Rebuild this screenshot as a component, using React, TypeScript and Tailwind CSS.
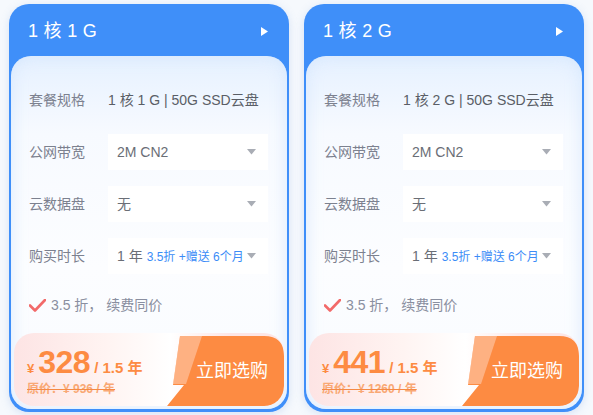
import React from "react";

type Plan = {
  title: string;
  spec: string;
  price: string;
  orig: string;
};

const plans: Plan[] = [
  { title: "1 核 1 G", spec: "1 核 1 G | 50G SSD云盘", price: "328", orig: "原价：¥ 936 / 年" },
  { title: "1 核 2 G", spec: "1 核 2 G | 50G SSD云盘", price: "441", orig: "原价：¥ 1260 / 年" },
];

function Caret() {
  return (
    <svg width="9" height="6" viewBox="0 0 9 6" className="shrink-0">
      <path d="M0 0 H9 L4.5 5.5 Z" fill="#a9adb5" />
    </svg>
  );
}

function Row({ label, children }: { label: string; children: React.ReactNode }) {
  return (
    <div className="flex items-center h-[36px]">
      <div className="w-[79px] text-[14px] text-[#7c818f]">{label}</div>
      {children}
    </div>
  );
}

function Select({ children }: { children: React.ReactNode }) {
  return (
    <div className="w-[160px] h-[36px] bg-white flex items-center justify-between pl-[9px] pr-[12px] text-[14px] text-[#6a6e76]">
      <div className="flex items-baseline whitespace-nowrap">{children}</div>
      <Caret />
    </div>
  );
}

function Card({ p }: { p: Plan }) {
  return (
    <div className="w-[280px] h-[408px] rounded-[20px] bg-[#3f8ff9] p-[2px] pb-[3px] flex flex-col shadow-[0_2px_8px_rgba(120,160,220,0.25)]">
      <div className="h-[50px] flex items-center justify-between pl-[17px] pr-[19px] shrink-0">
        <span className="text-white text-[18px] tracking-[0.3px]">{p.title}</span>
        <svg width="7" height="9" viewBox="0 0 7 9">
          <path d="M0 0 L7 4.5 L0 9 Z" fill="#ffffff" />
        </svg>
      </div>
      <div className="flex-1 rounded-[20px] bg-[linear-gradient(180deg,#e6f1ff_0%,#f7faff_22%,#fcfdff_60%,#f8fbff_100%)] shadow-[inset_0_0_16px_rgba(205,226,252,0.7)] flex flex-col pt-[26px] pb-[3px] px-[3px]">
        <div className="flex flex-col gap-[16px] pl-[15px]">
          <Row label="套餐规格">
            <span className="text-[14px] text-[#5a5e66]">{p.spec}</span>
          </Row>
          <Row label="公网带宽">
            <Select>2M CN2</Select>
          </Row>
          <Row label="云数据盘">
            <Select>无</Select>
          </Row>
          <Row label="购买时长">
            <Select>
              <span>1 年</span>
              <span className="text-[12px] text-[#3b8cf7] ml-[4px]">3.5折 +赠送 6个月</span>
            </Select>
          </Row>
        </div>
        <div className="flex items-center pl-[15px] mt-[20px] h-[22px] text-[14px] text-[#8a8fa0]">
          <svg width="17" height="13" viewBox="0 0 17 13" className="mr-[5px]">
            <path d="M1 6.5 L6 11.5 L16 1" stroke="#f26a6a" strokeWidth="2.6" fill="none" strokeLinecap="round" strokeLinejoin="round" />
          </svg>
          <span>3.5 折， 续费同价</span>
        </div>
        <div className="mt-auto relative h-[73px] rounded-[20px] overflow-hidden bg-[linear-gradient(90deg,#fde4e4_0%,#fff4f2_35%,#ffffff_58%,#fde6e6_80%)] flex">
          <svg className="absolute right-0 top-[3px]" width="120" height="70" viewBox="0 0 120 70">
            <path d="M16 0 H100 Q120 0 120 20 V50 Q120 70 100 70 H3 L20 49 H9 Z" fill="#fd8b42" />
            <path d="M16 0 H38 L22 48 H9 Z" fill="#ffd2b8" fillOpacity="0.55" />
          </svg>
          <div className="flex-1 flex flex-col justify-center pl-[13px] pt-[2px]">
            <div className="flex items-baseline text-[#fd8b42] font-bold leading-none">
              <span className="text-[13px] mr-[4px]">¥</span>
              <span className="text-[32px] tracking-[-0.5px]">{p.price}</span>
              <span className="text-[15px] ml-[4px]">/ 1.5 年</span>
            </div>
            <div className="text-[12px] font-bold text-[#f9a874] line-through decoration-[#f58a45] mt-[5px] leading-none">{p.orig}</div>
          </div>
          <div className="relative w-[104px] flex items-center justify-center text-white text-[18px] pt-[3px]">
            立即选购
          </div>
        </div>
      </div>
    </div>
  );
}

export default function App() {
  return (
    <div className="w-[593px] h-[415px] bg-[#f6f9fd] flex gap-[15px] pl-[9px] pt-[4px] font-['Liberation_Sans','Noto_Sans_CJK_SC',sans-serif]">
      {plans.map((p) => (
        <Card key={p.title} p={p} />
      ))}
    </div>
  );
}
